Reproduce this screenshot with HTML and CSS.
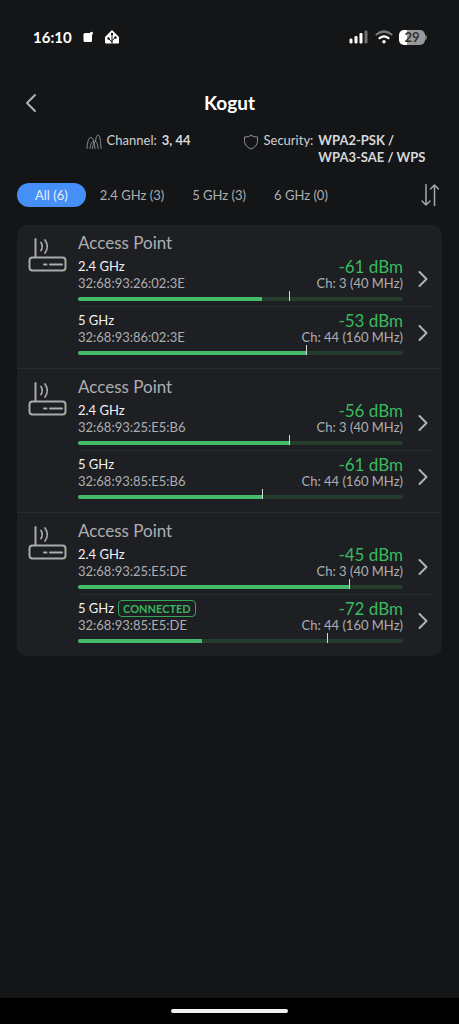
FILE: index.html
```html
<!DOCTYPE html>
<html lang="en">
<head>
<meta charset="utf-8">
<meta name="viewport" content="width=device-width, initial-scale=1">
<title>Kogut</title>
<link rel="stylesheet" href="styles.css">
</head>
<body>
<svg class="defs" aria-hidden="true">
  <symbol id="router" viewBox="0 0 40 36">
    <rect x="1.500" y="20.500" width="36" height="13" rx="3"/>
    <path d="M7.500 2V20M16 27.500H18.500M22 27.500H34"/>
    <path stroke-width="1.700" d="M13 5.500Q15.500 9.500 13 13.500M17 3Q21.500 9.500 17 16"/>
  </symbol>
  <symbol id="next" viewBox="0 0 10 18"><path d="M1.500 2L8.500 9L1.500 16"/></symbol>
</svg>
<div class="screen">
  <div class="status">
    <div class="status-left">
      <span class="clock">16:10</span>
      <svg width="10" height="12" viewBox="0 0 10 12"><g fill="#fff"><rect x="0.500" y="2" width="8.500" height="9" rx="1.500"/><circle cx="8.500" cy="2.200" r="1.500"/></g></svg>
      <svg width="16" height="16" viewBox="0 0 16 16"><path d="M8 1L15 8V13.500Q15 14.500 14 14.500H2Q1 14.500 1 13.500V8Z" fill="#fff"/><path d="M8 14V5M8 13L4.500 9.500M8 11.500L11.500 8.500" stroke="#131517" stroke-width="1" fill="none"/><g fill="#131517"><circle cx="8" cy="5" r="1.200"/><circle cx="4.500" cy="9.500" r="1.200"/><circle cx="11.500" cy="8.500" r="1.200"/></g></svg>
    </div>
    <div class="status-right">
      <svg width="20" height="14" viewBox="0 0 20 14"><g fill="#fff"><rect x="0.500" y="8.500" width="3" height="5" rx="1.200"/><rect x="5.500" y="6" width="3" height="7.500" rx="1.200"/><rect x="10.500" y="3" width="3" height="10.500" rx="1.200"/><rect x="15.500" y="0.500" width="3" height="13" rx="1.200" fill="#6f7072"/></g></svg>
      <svg width="18" height="14" viewBox="0 0 18 14" stroke-width="2.200"><path d="M1.500 4.500Q9 -1.500 16.500 4.500" stroke="#77787a"/><path d="M4.500 8.200Q9 4.600 13.500 8.200" stroke="#fff"/><circle cx="9" cy="11.800" r="1.700" fill="#fff"/></svg>
      <span class="battery">29</span>
    </div>
  </div>

  <header class="header">
    <button class="back" aria-label="Back"><svg width="12" height="20" viewBox="0 0 12 20"><path d="M10 2L2 10L10 18"/></svg></button>
    <h1>Kogut</h1>
  </header>

  <div class="facts">
    <div class="fact">
      <svg width="16" height="16" viewBox="0 0 16 16"><path d="M1 14.500C1.500 8 2.500 3.500 5 3.500C7.500 3.500 8.500 9 9 14.500M4 14.500C4.500 10 5.500 7.500 7.500 7.500M6.500 14.500C7 10 8 7.500 9.500 7.500C11 7.500 12 11 12 14.500M9.500 7.500C10 3 11 1 12 1C14 1 14.800 8 15 14.500"/></svg>
      <span>Channel:</span><strong>3, 44</strong>
    </div>
    <div class="fact">
      <svg width="16" height="16" viewBox="0 0 16 16"><path d="M8 1.500Q10.500 3.200 14.500 3V7.500Q14 12.500 8 15Q2 12.500 1.500 7.500V3Q5.500 3.200 8 1.500Z"/></svg>
      <span>Security:</span><strong>WPA2-PSK /<br>WPA3-SAE / WPS</strong>
    </div>
  </div>

  <nav class="filters">
    <button class="chip active">All (6)</button>
    <button class="chip">2.4 GHz (3)</button>
    <button class="chip">5 GHz (3)</button>
    <button class="chip">6 GHz (0)</button>
    <button class="sort" aria-label="Sort"><svg width="18" height="24" viewBox="0 0 18 24"><path d="M5 1.500V22M1 18L5 22L9 18M13.500 22.500V2M9.500 6L13.500 2L17.500 6"/></svg></button>
  </nav>

  <main class="card">
    <section class="group">
      <svg class="router" width="40" height="36"><use href="#router"/></svg>
      <div class="points">
        <h2>Access Point</h2>
        <a class="row" href="#ap1-24">
          <span class="info">
            <span class="line"><span class="band">2.4 GHz</span><span class="signal">-61 dBm</span></span>
            <span class="line"><span>32:68:93:26:02:3E</span><span>Ch: 3 (40 MHz)</span></span>
            <span class="track"><span class="fill" style="width:56.500%"></span><span class="peak" style="left:65%"></span></span>
          </span>
          <svg class="next" width="10" height="18"><use href="#next"/></svg>
        </a>
        <a class="row" href="#ap1-5">
          <span class="info">
            <span class="line"><span class="band">5 GHz</span><span class="signal">-53 dBm</span></span>
            <span class="line"><span>32:68:93:86:02:3E</span><span>Ch: 44 (160 MHz)</span></span>
            <span class="track"><span class="fill" style="width:70%"></span><span class="peak" style="left:70%"></span></span>
          </span>
          <svg class="next" width="10" height="18"><use href="#next"/></svg>
        </a>
      </div>
    </section>
    <section class="group">
      <svg class="router" width="40" height="36"><use href="#router"/></svg>
      <div class="points">
        <h2>Access Point</h2>
        <a class="row" href="#ap2-24">
          <span class="info">
            <span class="line"><span class="band">2.4 GHz</span><span class="signal">-56 dBm</span></span>
            <span class="line"><span>32:68:93:25:E5:B6</span><span>Ch: 3 (40 MHz)</span></span>
            <span class="track"><span class="fill" style="width:65%"></span><span class="peak" style="left:65%"></span></span>
          </span>
          <svg class="next" width="10" height="18"><use href="#next"/></svg>
        </a>
        <a class="row" href="#ap2-5">
          <span class="info">
            <span class="line"><span class="band">5 GHz</span><span class="signal">-61 dBm</span></span>
            <span class="line"><span>32:68:93:85:E5:B6</span><span>Ch: 44 (160 MHz)</span></span>
            <span class="track"><span class="fill" style="width:56.500%"></span><span class="peak" style="left:56.500%"></span></span>
          </span>
          <svg class="next" width="10" height="18"><use href="#next"/></svg>
        </a>
      </div>
    </section>
    <section class="group">
      <svg class="router" width="40" height="36"><use href="#router"/></svg>
      <div class="points">
        <h2>Access Point</h2>
        <a class="row" href="#ap3-24">
          <span class="info">
            <span class="line"><span class="band">2.4 GHz</span><span class="signal">-45 dBm</span></span>
            <span class="line"><span>32:68:93:25:E5:DE</span><span>Ch: 3 (40 MHz)</span></span>
            <span class="track"><span class="fill" style="width:83.300%"></span><span class="peak" style="left:83.300%"></span></span>
          </span>
          <svg class="next" width="10" height="18"><use href="#next"/></svg>
        </a>
        <a class="row" href="#ap3-5">
          <span class="info">
            <span class="line"><span class="band">5 GHz <span class="badge">CONNECTED</span></span><span class="signal">-72 dBm</span></span>
            <span class="line"><span>32:68:93:85:E5:DE</span><span>Ch: 44 (160 MHz)</span></span>
            <span class="track"><span class="fill" style="width:38.300%"></span><span class="peak" style="left:76.500%"></span></span>
          </span>
          <svg class="next" width="10" height="18"><use href="#next"/></svg>
        </a>
      </div>
    </section>
  </main>
  <footer class="home-area"><div class="home-bar"></div></footer>
</div>
</body>
</html>
```
FILE: styles.css
```css
* { box-sizing: border-box; }
body { margin: 0; background: #131517; color: #adaeb2; font: 13px/17px Lato, "Open Sans", sans-serif; }
button { border: 0; padding: 0; background: none; color: inherit; font: inherit; }
svg { display: block; flex: none; fill: none; stroke-linecap: round; stroke-linejoin: round; }
.defs { position: absolute; width: 0; height: 0; }
.screen { display: flex; flex-direction: column; min-height: 100vh; }

.status { display: flex; justify-content: space-between; align-items: center; height: 74px; padding: 0 34px 0 33px; }
.status-left { display: flex; align-items: center; gap: 11px; }
.clock { color: #fff; font-size: 15px; font-weight: 700; }
.status-right { display: flex; align-items: center; gap: 6px; }
.battery { position: relative; width: 26px; height: 15px; border-radius: 5px; background: linear-gradient(90deg, #fff 29%, #98999b 29%); color: #303134; font-size: 13px; line-height: 15px; font-weight: 700; text-align: center; }
.battery::after { content: ""; position: absolute; left: 100%; top: 5px; width: 2px; height: 5px; border-radius: 0 2px 2px 0; background: #77787a; }

.header { display: grid; grid-template-columns: 36px 1fr 36px; align-items: center; height: 58px; padding: 0 17px; }
.back { display: grid; place-items: center; width: 28px; height: 32px; }
.back svg { stroke: #b0b1b4; stroke-width: 2; }
h1 { margin: 0; color: #fff; font-size: 19px; line-height: 26px; font-weight: 700; text-align: center; }

.facts { display: flex; justify-content: center; gap: 52px; padding-left: 52px; color: #cfd0d3; }
.fact { display: flex; gap: 5px; }
.fact svg { margin-top: 2px; stroke: #8e8f92; stroke-width: 1; }
.fact strong { color: #d8d9db; font-weight: 700; }

.filters { display: flex; align-items: center; height: 24px; margin: 17px 20px 18px 17px; }
.chip { height: 24px; padding: 0 14px; border-radius: 12px; }
.chip.active { padding: 0 18px; background: #458ff7; color: #e6efff; }
.sort { margin-left: auto; }
.sort svg { stroke: #a7a8ab; stroke-width: 1.500; }

.card { margin: 0 17px; border-radius: 10px; background: #1d1f23; }
.group { display: flex; padding: 9px 10px 8px 11px; }
.group + .group { border-top: 1px solid #292b2f; }
.router { margin: 3px 10px 0 0; stroke: #a9aaad; stroke-width: 2; }
.points { flex: 1; min-width: 0; }
h2 { margin: 0; color: #adaeb2; font-size: 17px; line-height: 18px; font-weight: 400; }
.row { display: flex; align-items: center; justify-content: space-between; height: 54px; padding: 5px 4px 5px 0; color: inherit; text-decoration: none; }
.row + .row { border-top: 1px solid #292b2f; padding-top: 4px; }
.info { display: block; flex: 1; margin-right: 15px; }
.line { display: flex; justify-content: space-between; }
.band { display: flex; gap: 4px; color: #f1f1f3; }
.signal { color: #3aba60; font-size: 17px; }
.badge { height: 17px; padding: 0 4px; border: 1px solid #35a657; border-radius: 4px; color: #39b65e; font-size: 11px; line-height: 15px; font-weight: 700; }
.track { position: relative; display: block; height: 4px; margin-top: 5px; border-radius: 2px; background: #233c2c; }
.fill { display: block; height: 4px; border-radius: 2px 0 0 2px; background: #44bb68; }
.peak { position: absolute; bottom: 0; width: 1px; height: 10px; background: #d5d6d8; }
.next { stroke: #b3b4b7; stroke-width: 2; }

.home-area { display: grid; place-items: center; height: 26px; margin-top: auto; background: #000; }
.home-bar { width: 117px; height: 4px; border-radius: 2px; background: #f1f1f1; }
```
